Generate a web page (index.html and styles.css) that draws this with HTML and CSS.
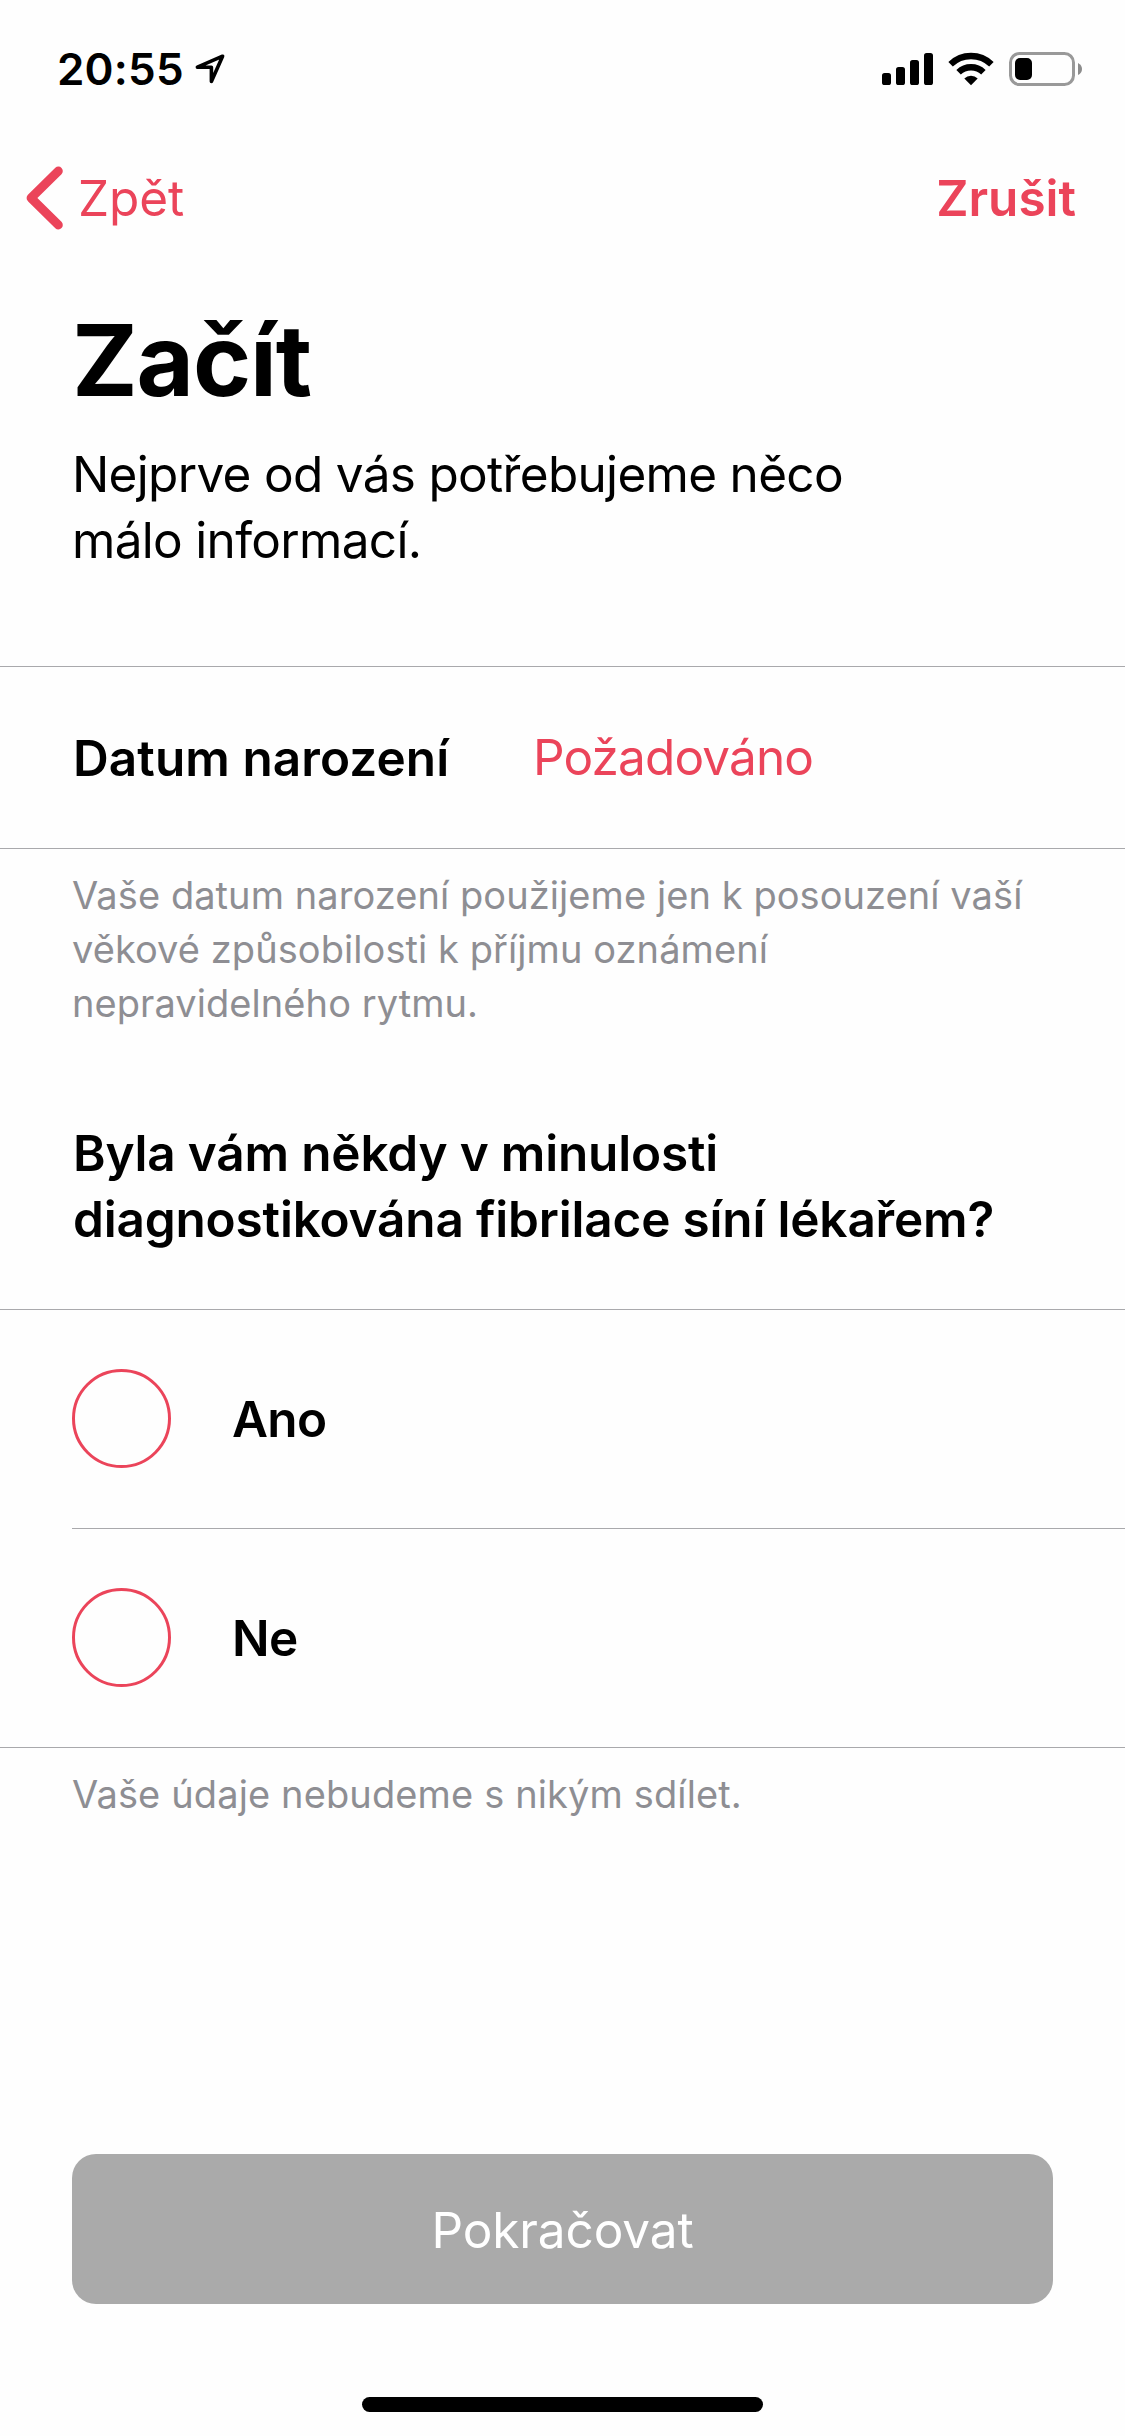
FILE: index.html
```html
<!DOCTYPE html>
<html lang="cs">
<head>
<meta charset="utf-8">
<title>Začít</title>
<link rel="stylesheet" href="styles.css">
</head>
<body>
<div class="screen">
  <header class="status">
    <span class="time">20:55</span>
    <svg class="location" width="32" height="32" viewBox="0 0 32 32" fill="none" stroke="#000" stroke-width="3.6" stroke-linejoin="round"><path d="M28.6 3.2 3.4 14.2H17.4V28.4Z"/></svg>
    <div class="indicators">
      <svg width="51" height="32" viewBox="0 0 51 32"><rect x="0" y="20" width="9" height="12" rx="2.6"/><rect x="14" y="14" width="9" height="18" rx="2.6"/><rect x="28" y="7" width="9" height="25" rx="2.6"/><rect x="42" y="0" width="9" height="32" rx="2.6"/></svg>
      <svg class="wifi" width="46" height="34" viewBox="0 0 46 34"><g fill="none" stroke="#000" stroke-width="6.4"><path d="M2.6 12.2A29.3 29.3 0 0 1 43.4 12.2"/><path d="M10.6 20.3A17.8 17.8 0 0 1 35.4 20.3"/></g><path d="M16.3 26.4A9.5 9.5 0 0 1 29.7 26.4L23 33.2Z"/></svg>
      <svg class="battery" width="74" height="34" viewBox="0 0 74 34"><rect x="1.5" y="1.5" width="63" height="31" rx="9" fill="none" stroke="#999" stroke-width="3"/><rect x="6" y="6" width="17" height="22" rx="5"/><path d="M69 11Q73 13 73 17T69 23Z" fill="#8c8c8c"/></svg>
    </div>
  </header>
  <nav class="nav">
    <a class="back"><svg width="38" height="64" viewBox="0 0 38 64" fill="none" stroke="#eb445a" stroke-width="8.8" stroke-linecap="round" stroke-linejoin="round"><path d="M33.4 5 6 32 33.4 59"/></svg><span>Zpět</span></a>
    <a class="cancel">Zrušit</a>
  </nav>
  <h1 class="title">Začít</h1>
  <p class="intro">Nejprve od vás potřebujeme něco<br>málo informací.</p>
  <div class="birth">
    <span class="birth-label">Datum narození</span>
    <span class="birth-value">Požadováno</span>
  </div>
  <p class="note">Vaše datum narození použijeme jen k posouzení vaší<br>věkové způsobilosti k příjmu oznámení<br>nepravidelného rytmu.</p>
  <h2 class="question">Byla vám někdy v minulosti<br>diagnostikována fibrilace síní lékařem?</h2>
  <div class="options">
    <div class="option"><span class="radio"></span><span>Ano</span></div>
    <div class="option"><span class="radio"></span><span>Ne</span></div>
  </div>
  <p class="note note-last">Vaše údaje nebudeme s nikým sdílet.</p>
  <button class="continue">Pokračovat</button>
  <div class="home"></div>
</div>
</body>
</html>
```
FILE: styles.css
```css
* { box-sizing: border-box; margin: 0; padding: 0; }

body {
  background: #fefefe;
  color: #000;
  font: 400 49.5px/66px Inter, "Liberation Sans", sans-serif;
}

.screen {
  display: flex;
  flex-direction: column;
  width: 1125px;
  height: 2436px;
}

.status {
  display: flex;
  align-items: center;
  height: 99px;
  padding: 39px 42px 0 57px;
}
.time { font-size: 44px; font-weight: 600; line-height: 60px; letter-spacing: 0.2px; }
.location { margin-left: 10px; }
.indicators { display: flex; align-items: center; margin-left: auto; }
.wifi { margin-left: 15px; }
.battery { margin-left: 15px; }

.nav {
  display: flex;
  align-items: center;
  justify-content: space-between;
  height: 132px;
  margin-top: 33px;
  padding: 0 49px 0 25px;
  color: #eb445a;
}
.back { display: flex; align-items: center; gap: 15px; letter-spacing: -0.1px; }
.cancel { font-weight: 600; letter-spacing: 0; }

.title {
  margin: 36px 72px 0;
  font-size: 99px;
  font-weight: 700;
  line-height: 120px;
  letter-spacing: -1.15px;
}
.intro { margin: 21px 72px 0; letter-spacing: -0.69px; }

.birth {
  display: flex;
  align-items: center;
  height: 183px;
  margin-top: 93px;
  padding-left: 73px;
  border-top: 1px solid #a9a9ac;
  border-bottom: 1px solid #a9a9ac;
}
.birth-label { width: 460px; font-weight: 600; letter-spacing: 0.08px; }
.birth-value { padding-bottom: 2px; color: #eb445a; letter-spacing: -0.86px; }

.note {
  margin: 19px 72px 0;
  color: #8e8e93;
  font-size: 38px;
  line-height: 54px;
  letter-spacing: 0.07px;
}
.note-last { letter-spacing: 0.13px; }

.question {
  margin: 90px 73px 0;
  font-size: inherit;
  font-weight: 600;
  letter-spacing: -0.18px;
}

.options {
  margin-top: 57px;
  border-top: 1px solid #a9a9ac;
  border-bottom: 1px solid #a9a9ac;
}
.option {
  display: flex;
  gap: 61px;
  height: 218px;
  margin-left: 72px;
  padding-top: 59px;
  font-weight: 600;
  line-height: 100px;
  letter-spacing: -0.65px;
}
.option + .option { height: 219px; border-top: 1px solid #a9a9ac; }
.radio { width: 99px; height: 99px; border: 3px solid #eb445a; border-radius: 50%; }

.continue {
  height: 150px;
  margin: auto 72px 93px;
  padding-top: 2px;
  border: 0;
  border-radius: 24px;
  background: #aaa;
  color: #fff;
  font: inherit;
  letter-spacing: -0.11px;
}
.home {
  align-self: center;
  width: 401px;
  height: 15px;
  margin-bottom: 24px;
  border-radius: 7.5px;
  background: #000;
}
```
